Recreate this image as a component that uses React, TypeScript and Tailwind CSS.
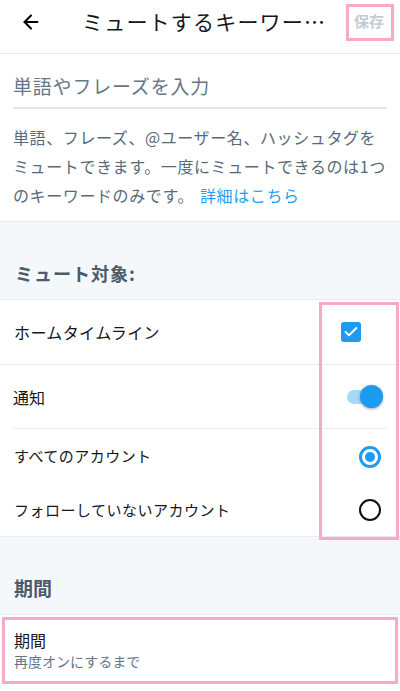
import { ArrowLeft, Check } from "lucide-react";

const jp = { fontFamily: '"Noto Sans CJK JP", "Noto Sans", sans-serif' };

function Toggle() {
  return (
    <div className="relative w-[36px] h-[24px]">
      <div className="absolute left-0 top-[5px] w-[32px] h-[14px] rounded-full bg-[#a4d9f9]" />
      <div className="absolute right-0 top-0 w-[23px] h-[23px] rounded-full bg-[#1d9bf0] shadow-[0_1px_3px_rgba(0,0,0,0.35)]" />
    </div>
  );
}

function Radio({ on }: { on: boolean }) {
  return on ? (
    <div className="w-[22px] h-[22px] rounded-full border-[3px] border-[#1d9bf0] flex items-center justify-center">
      <div className="w-[10px] h-[10px] rounded-full bg-[#1d9bf0]" />
    </div>
  ) : (
    <div className="w-[22px] h-[22px] rounded-full border-[2.5px] border-[#111]" />
  );
}

export default function App() {
  return (
    <div className="relative w-[400px] h-[691px] bg-white overflow-hidden text-[#14171a]" style={jp}>
      {/* header */}
      <div className="h-[54px] pb-[10px] flex items-center border-b border-[#e6ecf0]">
        <div className="w-[82px] pl-[20px] flex items-center">
          <ArrowLeft size={22} strokeWidth={2.2} className="text-black" />
        </div>
        <div className="flex-1 text-[21px] tracking-[1.2px] leading-none">ミュートするキーワー…</div>
        <div className="pr-[16px] text-[15px] text-[#c3ccd4] font-bold">保存</div>
      </div>

      {/* keyword input + help */}
      <div className="px-[13px] pt-[18px] border-b border-[#e6ecf0]">
        <div className="h-[37px] border-b-2 border-[#e1e6ea] text-[19px] tracking-[0.8px] leading-[28px] text-[#657786]">
          単語やフレーズを入力
        </div>
        <p className="pt-[14px] pb-[11px] text-[16px] leading-[29px] tracking-[0.6px] text-[#586a79]">
          単語、フレーズ、@ユーザー名、ハッシュタグをミュートできます。一度にミュートできるのは1つのキーワードのみです。
          <span className="text-[#1da1f2] ml-[6px]">詳細はこちら</span>
        </p>
      </div>

      {/* mute target */}
      <div className="h-[78px] bg-[#f5f8fa] flex items-end pb-[14px] px-[15px] border-b border-[#e6ecf0]">
        <span className="text-[18px] leading-[24px] font-bold text-[#4a5b6a] tracking-[1px]">ミュート対象:</span>
      </div>

      <div className="border-b border-[#e6ecf0]">
        <div className="h-[65px] flex items-center justify-between px-[14px] border-b border-[#e6ecf0]">
          <span className="text-[16px] tracking-[0.4px]">ホームタイムライン</span>
          <div className="mr-[25px] w-[20px] h-[20px] rounded-[3px] bg-[#1d9bf0] flex items-center justify-center">
            <Check size={16} strokeWidth={3} className="text-white" />
          </div>
        </div>
        <div className="mx-[13px] h-[64px] flex items-center justify-between border-b border-[#eceff1]">
          <span className="text-[16px]">通知</span>
          <div className="mr-[4px]">
            <Toggle />
          </div>
        </div>
        <div className="h-[55px] flex items-center justify-between px-[14px]">
          <span className="text-[15px] tracking-[0.5px]">すべてのアカウント</span>
          <div className="mr-[5px]">
            <Radio on />
          </div>
        </div>
        <div className="h-[52px] flex items-center justify-between px-[14px]">
          <span className="text-[15px] tracking-[0.5px]">フォローしていないアカウント</span>
          <div className="mr-[5px]">
            <Radio on={false} />
          </div>
        </div>
      </div>

      {/* duration */}
      <div className="h-[78px] bg-[#f5f8fa] flex items-end pb-[14px] px-[14px] border-b border-[#e6ecf0]">
        <span className="text-[19px] leading-[24px] font-bold text-[#4a5b6a]">期間</span>
      </div>
      <div className="px-[14px] pt-[14px]">
        <div className="text-[16px] leading-[22px]">期間</div>
        <div className="text-[14px] leading-[20px] text-[#657786]">再度オンにするまで</div>
      </div>

      {/* highlight frames */}
      <div className="absolute left-[346px] top-[4px] w-[48px] h-[37px] border-[3px] border-[#f9a9c8]" />
      <div className="absolute left-[319px] top-[302px] w-[80px] h-[238px] border-[3px] border-[#f9a9c8]" />
      <div className="absolute left-[2px] top-[617px] w-[396px] h-[67px] border-[3px] border-[#f9a9c8]" />
    </div>
  );
}
